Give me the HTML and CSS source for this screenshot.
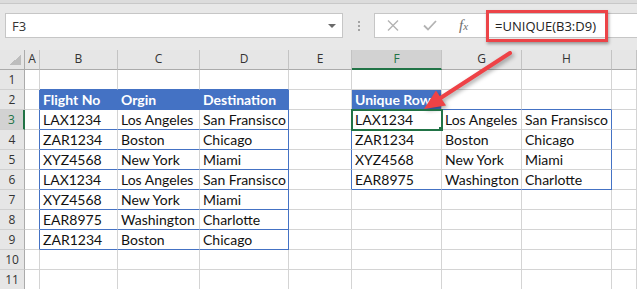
FILE: index.html
```html
<!DOCTYPE html>
<html lang="en">
<head>
    <meta charset="UTF-8">
    <meta name="viewport" content="width=device-width, initial-scale=1.0">
    <title>UNIQUE function</title>
    <link rel="stylesheet" href="styles.css">
</head>
<body>
    <div class="ribbon-edge"></div>

    <div class="formula-row">
        <div class="name-box">
            <span class="cell-ref">F3</span>
            <span class="drop"></span>
        </div>
        <div class="grip"><i></i><i></i><i></i></div>
        <div class="formula-box">
            <svg class="btn-cancel" width="12" height="11" viewBox="0 0 12 11">
                <path d="M1 0.5 L11 10.5 M11 0.5 L1 10.5" stroke="#b3b3b3" stroke-width="1.4" fill="none"/>
            </svg>
            <svg class="btn-enter" width="14" height="11" viewBox="0 0 14 11">
                <path d="M1 5.5 L5 9.5 L13 1" stroke="#b3b3b3" stroke-width="1.8" fill="none"/>
            </svg>
            <span class="fx"><i>f</i><em>x</em></span>
            <span class="formula">=UNIQUE(B3:D9)</span>
        </div>
    </div>

    <!-- red callout round the formula -->
    <div class="callout"></div>

    <div class="sheet" id="sheet">
        <!-- cells are built by the script below -->
    </div>

    <svg class="arrow" width="637" height="289" viewBox="0 0 637 289">
        <line x1="510" y1="53" x2="439" y2="99" stroke="#ee4246" stroke-width="4" stroke-linecap="round"/>
        <polygon points="424,109 436,90.5 446,105.5" fill="#ee4246"/>
    </svg>

    <script>
        // source table B2:D9
        const source = [
            ['Flight No', 'Orgin', 'Destination'],
            ['LAX1234', 'Los Angeles', 'San Fransisco'],
            ['ZAR1234', 'Boston', 'Chicago'],
            ['XYZ4568', 'New York', 'Miami'],
            ['LAX1234', 'Los Angeles', 'San Fransisco'],
            ['XYZ4568', 'New York', 'Miami'],
            ['EAR8975', 'Washington', 'Charlotte'],
            ['ZAR1234', 'Boston', 'Chicago']
        ];

        // spilled result F3:H6
        const unique = [
            ['LAX1234', 'Los Angeles', 'San Fransisco'],
            ['ZAR1234', 'Boston', 'Chicago'],
            ['XYZ4568', 'New York', 'Miami'],
            ['EAR8975', 'Washington', 'Charlotte']
        ];

        const letters = ['', 'A', 'B', 'C', 'D', 'E', 'F', 'G', 'H', ''];
        const sheet = document.getElementById('sheet');

        function valueAt(r, c) {
            if (r >= 2 && r <= 9 && c >= 2 && c <= 4) return source[r - 2][c - 2];
            if (r === 2 && c === 6) return 'Unique Rows';
            if (r >= 3 && r <= 6 && c >= 6 && c <= 8) return unique[r - 3][c - 6];
            return '';
        }

        function blueRight(r, c) {
            if ((c === 1 || c === 4) && r >= 2 && r <= 9) return true;
            if (r === 2 && (c === 2 || c === 3)) return true;
            if ((c === 5 || c === 8) && r >= 3 && r <= 6) return true;
            return false;
        }

        function blueBottom(r, c) {
            if (c >= 2 && c <= 4 && r >= 1 && r <= 9) return true;
            if (c >= 6 && c <= 8 && (r === 2 || r === 6)) return true;
            return false;
        }

        // column headers
        letters.forEach((letter, c) => {
            const cell = document.createElement('div');
            cell.className = c === 0 ? 'corner' : 'col-head';
            if (c === 6) cell.classList.add('selected');
            cell.textContent = letter;
            sheet.appendChild(cell);
        });

        // rows
        for (let r = 1; r <= 11; r++) {
            const head = document.createElement('div');
            head.className = 'row-head';
            if (r === 3) head.classList.add('selected');
            head.textContent = r;
            sheet.appendChild(head);

            for (let c = 1; c <= 9; c++) {
                const cell = document.createElement('div');
                cell.className = 'cell';
                if (blueRight(r, c)) cell.classList.add('edge-right');
                if (blueBottom(r, c)) cell.classList.add('edge-bottom');
                if (r === 2 && (c >= 2 && c <= 4 || c === 6)) cell.classList.add('table-head');
                if (r === 3 && c === 6) cell.classList.add('active');
                cell.textContent = valueAt(r, c);
                sheet.appendChild(cell);
            }
        }
    </script>
</body>
</html>
```

FILE: styles.css
```css
* {
    margin: 0;
    padding: 0;
    box-sizing: border-box;
}

body {
    width: 637px;
    height: 289px;
    overflow: hidden;
    background-color: #fff;
    font-family: 'Open Sans', sans-serif;
    position: relative;
}

.ribbon-edge {
    height: 4px;
    background-color: #dcdcdc;
    border-bottom: 1px solid #c8c8c8;
}

.formula-row {
    height: 46px;
    background-color: #e8e8e8;
    display: flex;
    align-items: flex-start;
    padding: 9px 0 0 5px;
}

.name-box {
    width: 338px;
    height: 25px;
    background-color: #fff;
    border: 1px solid #c6c6c6;
    display: flex;
    align-items: center;
    justify-content: space-between;
    padding: 0 6px 0 6px;
}

.cell-ref {
    font-size: 13px;
    color: #333;
}

.drop {
    width: 0;
    height: 0;
    border-left: 4px solid transparent;
    border-right: 4px solid transparent;
    border-top: 4px solid #6a6a6a;
}

.grip {
    width: 31px;
    height: 25px;
    display: flex;
    flex-direction: column;
    align-items: center;
    justify-content: center;
    gap: 2px;
}

.grip i {
    width: 2px;
    height: 2px;
    background-color: #a3a3a3;
}

.formula-box {
    flex: 1;
    height: 25px;
    margin-right: -2px;
    background-color: #fff;
    border: 1px solid #c6c6c6;
    display: flex;
    align-items: center;
    padding-left: 12px;
}

.btn-enter {
    margin-left: 24px;
}

.fx {
    margin-left: 22px;
    font-family: 'Liberation Serif', serif;
    color: #6e6e6e;
    font-size: 15px;
}

.fx em {
    font-size: 11px;
}

.formula {
    margin-left: 27px;
    font-size: 13px;
    color: #222;
}

.callout {
    position: absolute;
    left: 486px;
    top: 10px;
    width: 122px;
    height: 32px;
    border: 3px solid #ec4448;
    box-shadow: 1px 2px 3px rgba(0, 0, 0, 0.35);
}

.sheet {
    display: grid;
    grid-template-columns: 25px 15px 78px 82px 89px 63px 90px 80px 90px 25px;
    grid-auto-rows: 20px;
}

.corner,
.col-head,
.row-head {
    background-color: #e6e6e6;
    font-size: 12px;
    color: #333;
    text-align: center;
    line-height: 18px;
}

.corner {
    border-right: 1px solid #ababab;
    border-bottom: 1px solid #ababab;
    background-image: linear-gradient(to bottom right, transparent 50%, #bdbdbd 50%);
    background-size: 12px 10px;
    background-repeat: no-repeat;
    background-position: right 3px bottom 4px;
}

.col-head {
    border-right: 1px solid #c3c3c3;
    border-bottom: 1px solid #ababab;
}

.row-head {
    border-right: 1px solid #ababab;
    border-bottom: 1px solid #d0d0d0;
    line-height: 20px;
}

.col-head.selected {
    background-color: #d2d2d2;
    color: #217346;
    border-bottom: 2px solid #217346;
}

.row-head.selected {
    background-color: #d2d2d2;
    color: #217346;
    border-right: 2px solid #217346;
}

.cell {
    border-right: 1px solid #d4d4d4;
    border-bottom: 1px solid #d4d4d4;
    font-family: 'Lato', sans-serif;
    font-size: 14px;
    line-height: 19px;
    color: #111;
    padding-left: 3px;
    white-space: nowrap;
    overflow: hidden;
}

.cell.edge-right {
    border-right-color: #4472c4;
}

.cell.edge-bottom {
    border-bottom-color: #4472c4;
}

.cell.table-head {
    background-color: #4472c4;
    color: #fff;
    font-weight: bold;
    overflow: visible;
}

.cell.active {
    position: relative;
    z-index: 1;
    outline: 2px solid #217346;
    outline-offset: -1px;
}

.cell.active::after {
    content: '';
    position: absolute;
    right: -3px;
    bottom: -3px;
    width: 5px;
    height: 5px;
    background-color: #217346;
    box-shadow: 0 0 0 1px #fff;
}

.arrow {
    position: absolute;
    left: 0;
    top: 0;
    pointer-events: none;
    filter: drop-shadow(2px 2px 2px rgba(0, 0, 0, 0.35));
}
```
